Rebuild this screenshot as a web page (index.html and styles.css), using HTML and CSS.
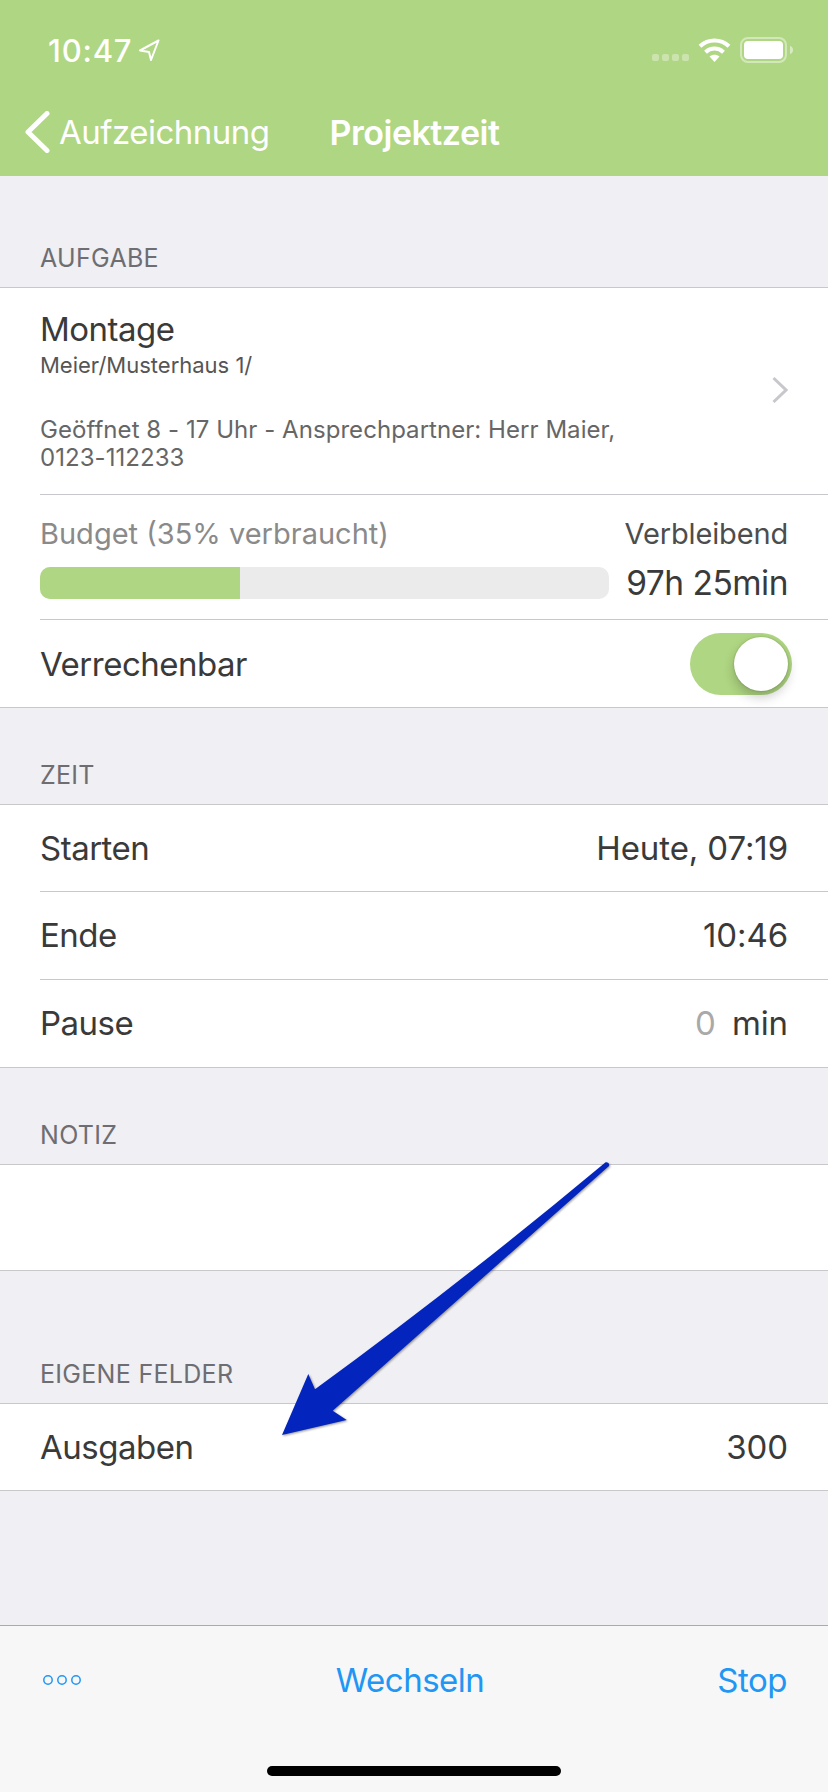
FILE: index.html
```html
<!DOCTYPE html>
<html lang="de">

<head>
    <meta charset="UTF-8">
    <meta name="viewport" content="width=device-width, initial-scale=1.0">
    <title>Projektzeit</title>
    <link rel="stylesheet" href="styles.css">
</head>

<body>
    <div class="screen">
        <header class="top">
            <div class="status">
                <div class="status-left">
                    <span class="clock">10:47</span>
                    <svg class="loc" width="22" height="22" viewBox="0 0 22 22">
                        <path d="M20.5 1.5 L2 11.5 L11 13 L13 21 Z" fill="none" stroke="#fff" stroke-width="2" stroke-linejoin="round" />
                    </svg>
                </div>
                <div class="status-right">
                    <div class="signal"><i></i><i></i><i></i><i></i></div>
                    <svg width="33" height="24" viewBox="0 0 33 24">
                        <path d="M16.5 24 L11.5 18.6 C14.4 16.2 18.6 16.2 21.5 18.6 Z" fill="#fff" />
                        <path d="M7.5 14.2 C12.6 9.4 20.4 9.4 25.5 14.2" fill="none" stroke="#fff" stroke-width="4" />
                        <path d="M2 8.2 C10.2 0.6 22.8 0.6 31 8.2" fill="none" stroke="#fff" stroke-width="4" />
                    </svg>
                    <svg class="battery" width="54" height="26" viewBox="0 0 54 26">
                        <rect x="1" y="1" width="45" height="24" rx="7" fill="none" stroke="#fff" stroke-opacity="0.45" stroke-width="2" />
                        <rect x="4" y="4" width="39" height="18" rx="4" fill="#fff" />
                        <path d="M50 9 C52 9.6 53 11 53 13 C53 15 52 16.4 50 17 Z" fill="#fff" fill-opacity="0.5" />
                    </svg>
                </div>
            </div>
            <nav class="nav">
                <svg class="back" width="26" height="42" viewBox="0 0 26 42">
                    <path d="M23 2.5 L4 21 L23 39.5" fill="none" stroke="#fff" stroke-width="5" stroke-linecap="round" stroke-linejoin="round" />
                </svg>
                <span class="back-label">Aufzeichnung</span>
                <span class="nav-title">Projektzeit</span>
            </nav>
        </header>

        <main class="list">
            <h2 class="heading first">AUFGABE</h2>
            <section class="card">
                <div class="row task">
                    <div class="task-text">
                        <div class="task-name">Montage</div>
                        <div class="task-path">Meier/Musterhaus 1/</div>
                        <div class="task-note">Geöffnet 8 - 17 Uhr - Ansprechpartner: Herr Maier,<br>0123-112233</div>
                    </div>
                    <svg class="chevron" width="18" height="28" viewBox="0 0 18 28">
                        <path d="M3.5 2 L16 14 L3.5 26" fill="none" stroke="#c7c7cc" stroke-width="3" />
                    </svg>
                </div>
                <div class="row budget">
                    <div class="budget-left">
                        <div class="budget-label">Budget (35% verbraucht)</div>
                        <div class="bar">
                            <div class="bar-fill" style="width: 35.2%"></div>
                        </div>
                    </div>
                    <div class="budget-right">
                        <div class="budget-caption">Verbleibend</div>
                        <div class="budget-value">97h 25min</div>
                    </div>
                </div>
                <div class="row toggle-row">
                    <span>Verrechenbar</span>
                    <div class="switch"><div class="knob"></div></div>
                </div>
            </section>

            <h2 class="heading">ZEIT</h2>
            <section class="card">
                <div class="row line"><span>Starten</span><span class="value">Heute, 07:19</span></div>
                <div class="row line"><span>Ende</span><span class="value">10:46</span></div>
                <div class="row line"><span>Pause</span><span class="value"><span class="muted">0</span> min</span></div>
            </section>

            <h2 class="heading">NOTIZ</h2>
            <section class="card note"></section>

            <h2 class="heading tall">EIGENE FELDER</h2>
            <section class="card">
                <div class="row line single"><span>Ausgaben</span><span class="value">300</span></div>
            </section>
        </main>

        <footer class="toolbar">
            <div class="tools">
                <svg class="dots" width="40" height="12" viewBox="0 0 40 12">
                    <circle cx="6" cy="6" r="4.2" fill="none" stroke="#2196f3" stroke-width="1.5" />
                    <circle cx="20" cy="6" r="4.2" fill="none" stroke="#2196f3" stroke-width="1.5" />
                    <circle cx="34" cy="6" r="4.2" fill="none" stroke="#2196f3" stroke-width="1.5" />
                </svg>
                <span class="tool-mid">Wechseln</span>
                <span class="tool-end">Stop</span>
            </div>
            <div class="home-bar"></div>
        </footer>

        <!-- annotation drawn over the screenshot -->
        <svg class="arrow" width="828" height="1792" viewBox="0 0 828 1792">
            <path d="M282 1435 L308.3 1374 L315 1389.3 Q463.7 1280.7 605 1162.7 C607 1161.5 610 1163.5 609 1166 L332.7 1410.7 L346.7 1420 Z" fill="#0425bd" />
        </svg>
    </div>
</body>

</html>
```

FILE: styles.css
```css
* {
    margin: 0;
    padding: 0;
    box-sizing: border-box;
}

body,
html {
    width: 828px;
    height: 1792px;
    overflow: hidden;
    font-family: Inter, "Noto Sans", sans-serif;
    color: #3a3a3a;
}

.screen {
    position: relative;
    display: flex;
    flex-direction: column;
    height: 100%;
    background: #efeff4;
}

/* header */
.top {
    height: 176px;
    background: #afd682;
    color: #fff;
}

.status {
    display: flex;
    justify-content: space-between;
    align-items: center;
    height: 100px;
    padding: 0 34px 0 48px;
}

.status-left {
    display: flex;
    align-items: center;
    gap: 6px;
}

.clock {
    font-size: 31px;
    font-weight: 500;
    letter-spacing: 0.8px;
}

.status-right {
    display: flex;
    align-items: center;
    gap: 9px;
}

.signal {
    display: flex;
    gap: 3px;
    margin-top: 15px;
}

.signal i {
    width: 7px;
    height: 7px;
    border-radius: 2px;
    background: rgba(255, 255, 255, 0.35);
}

.nav {
    display: flex;
    align-items: center;
    height: 42px;
    margin-top: 11px;
    padding-left: 24px;
}

.back-label {
    margin-left: 9px;
    font-size: 33px;
    letter-spacing: -0.5px;
}

.nav-title {
    margin-left: 60px;
    font-size: 34px;
    font-weight: 600;
    letter-spacing: -0.5px;
}

/* list */
.list {
    flex: 1;
}

.heading {
    display: flex;
    align-items: flex-end;
    height: 96px;
    padding: 0 0 14px 40px;
    font-size: 25px;
    font-weight: 400;
    color: #6d6d72;
    letter-spacing: 0.3px;
}

.heading.first {
    height: 111px;
}

.heading.tall {
    height: 132px;
}

.card {
    background: #fff;
    border-top: 1px solid #c8c7cc;
    border-bottom: 1px solid #c8c7cc;
}

.note {
    height: 107px;
}

.row {
    margin-left: 40px;
    padding-right: 40px;
    border-bottom: 1px solid #c8c7cc;
}

.row:last-child {
    border-bottom: 0;
}

.task {
    display: flex;
    justify-content: space-between;
    align-items: center;
    height: 207px;
}

.task-text {
    align-self: flex-start;
    padding-top: 21px;
}

.task-name {
    font-size: 33px;
    line-height: 40px;
    letter-spacing: -0.5px;
}

.task-path {
    margin-top: 2px;
    font-size: 22px;
    line-height: 28px;
    color: #555;
}

.task-note {
    margin-top: 37px;
    font-size: 24px;
    line-height: 28px;
    letter-spacing: 0.05px;
    color: #666;
}

.chevron {
    flex: none;
    margin-bottom: 2px;
}

.budget {
    display: flex;
    justify-content: space-between;
    height: 125px;
    padding-top: 19px;
    font-size: 29px;
}

.budget-left {
    width: 569px;
}

.budget-label {
    line-height: 40px;
    color: #8a8a8a;
}

.bar {
    height: 32px;
    margin-top: 13px;
    border-radius: 10px;
    background: #ebebeb;
    overflow: hidden;
}

.bar-fill {
    height: 100%;
    background: #afd682;
}

.budget-right {
    line-height: 40px;
    text-align: right;
}

.budget-caption {
    letter-spacing: -0.15px;
    color: #4d4d4d;
}

.budget-value {
    margin-top: 9px;
    font-size: 33.5px;
    letter-spacing: -0.5px;
}

.toggle-row {
    display: flex;
    justify-content: space-between;
    align-items: center;
    height: 87px;
    padding-right: 36px;
    font-size: 33px;
    letter-spacing: -0.5px;
}

.switch {
    position: relative;
    width: 102px;
    height: 62px;
    border-radius: 31px;
    background: #afd682;
}

.knob {
    position: absolute;
    top: 4px;
    right: 4px;
    width: 54px;
    height: 54px;
    border-radius: 50%;
    background: #fff;
    box-shadow: 0 6px 12px rgba(0, 0, 0, 0.22), 0 0 2px rgba(0, 0, 0, 0.25);
}

.line {
    display: flex;
    justify-content: space-between;
    align-items: center;
    height: 87.33px;
    font-size: 33px;
    letter-spacing: -0.5px;
}

.line.single {
    height: 86px;
}

.value {
    letter-spacing: -0.1px;
}

.muted {
    margin-right: 7px;
    color: #a9a9a9;
}

/* toolbar */
.toolbar {
    height: 167px;
    background: #f7f7f8;
    border-top: 1px solid #a9a9ae;
}

.tools {
    display: grid;
    grid-template-columns: 1fr auto 1fr;
    align-items: center;
    height: 108px;
    padding: 0 41px 0 33px;
    font-size: 33px;
    letter-spacing: -0.5px;
    color: #2196f3;
}

.dots {
    margin-left: 9px;
}

.tool-end {
    justify-self: end;
}

.home-bar {
    width: 294px;
    height: 10px;
    margin: 32px auto 0;
    border-radius: 5px;
    background: #000;
}

.arrow {
    position: absolute;
    top: 0;
    left: 0;
    pointer-events: none;
    filter: drop-shadow(1px 1px 1px rgba(0, 0, 0, 0.4));
}
```
